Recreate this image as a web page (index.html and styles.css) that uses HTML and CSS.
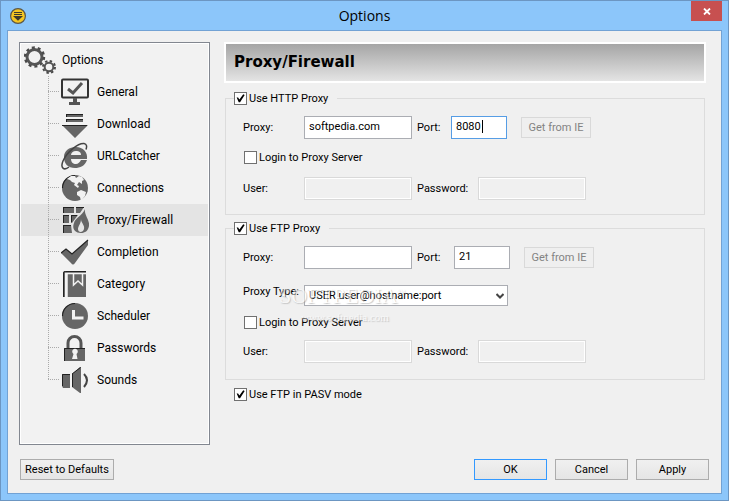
FILE: index.html
```
<!DOCTYPE html>
<html lang="en">
<head>
  <meta charset="UTF-8" />
  <meta name="viewport" content="width=device-width, initial-scale=1" />
  <title>Options</title>
  <link rel="stylesheet" href="styles.css">
</head>
<body>
  <div class="window">
    <header class="titlebar">
      <svg class="app-icon" viewBox="0 0 16 16">
        <circle cx="8" cy="8" r="7.4" fill="#f5c622" stroke="#5a5648" stroke-width="1.2"/>
        <path d="M4 4.500h8M4 6.500h8" stroke="#3d3a2c" stroke-width="1"/>
        <path d="M3 8h10l-5 4.800z" fill="#3d3a2c"/>
      </svg>
      <h1>Options</h1>
      <button class="close" aria-label="Close">
        <svg viewBox="0 0 8 7"><path d="M1 0.500l6 6M7 0.500l-6 6" stroke="#fff" stroke-width="1.800"/></svg>
      </button>
    </header>

    <form class="content">
      <div class="main">
        <nav class="tree">
          <a href="#options" class="root">
            <svg class="gears" viewBox="0 0 32 28">
              <circle cx="10.500" cy="11" r="7.500" fill="none" stroke="#555" stroke-width="3"/>
              <circle cx="10.500" cy="11" r="9.500" fill="none" stroke="#4a4a4a" stroke-width="2.400" stroke-dasharray="3 2.970"/>
              <circle cx="25" cy="21" r="4.300" fill="none" stroke="#555" stroke-width="2"/>
              <circle cx="25" cy="21" r="6" fill="none" stroke="#4a4a4a" stroke-width="2" stroke-dasharray="2.400 2.310"/>
            </svg>
            Options
          </a>
          <ul>
            <li><a href="#general">
              <svg viewBox="0 0 28 28">
                <rect x="1" y="1.500" width="26" height="18" rx="1" fill="none" stroke="#333" stroke-width="2"/>
                <path d="M7 11l5 4 9-10" fill="none" stroke="#555" stroke-width="3"/>
                <path d="M12 20h4v4h3v3H8v-3h4z" fill="#555"/>
              </svg>General</a></li>
            <li><a href="#download">
              <svg viewBox="0 0 28 28">
                <path d="M5 4h17v3H5zM5 9h17v3H5zM1 15h26L14 28z" fill="#666"/>
                <path d="M5 4.500h17M5 9.500h17M1 15.500h25M5.500 4v3M5.500 9v3" stroke="#222"/>
              </svg>Download</a></li>
            <li><a href="#urlcatcher">
              <svg viewBox="0 0 28 28">
                <path d="M26 18c-2 6-7 8-12 8-7 0-11-4-11-11C3 9 8 5 15 5s12 5 11 12H10c0 3 2 5 5 5 2 0 4-2 5-4zM10 13h10c0-3-2-4-5-4s-5 2-5 4z" fill="#666" fill-rule="evenodd"/>
                <path d="M8 25c-5 4-9 1-6-6C6 10 17 1 23 1.500c3 0.500 3 3 2 6" fill="none" stroke="#444" stroke-width="1.500"/>
              </svg>URLCatcher</a></li>
            <li><a href="#connections">
              <svg viewBox="0 0 28 28">
                <circle cx="14" cy="14" r="13" fill="#666"/>
                <path d="M1.500 14A12.500 12.500 0 0 1 14 1.500" fill="none" stroke="#222" stroke-width="1.200"/>
                <path d="M6 5l4-3h4l1 2 3-2 3 1 2 3-2 1v3l-3-2-2 3 2 1-1 2-4-3 1-2-3-1-2-2zM16 18l4-2 5 2-1 4-4 5-1-4-3-2z" fill="#f2f2f2"/>
              </svg>Connections</a></li>
            <li class="selected"><a href="#proxy">
              <svg viewBox="0 0 28 28">
                <path d="M2 1h11v6H2zM15 1h8l-4 6h-4zM2 9h6v8H2zM10 9h7l-6 8h-1zM2 19h8l1 8H2z" fill="#666"/>
                <path d="M2 1.500h11M15 1.500h8M2 9.500h6M10 9.500h6M2 19.500h8M2.500 1v6M2.500 9v8M2.500 19v8M10.500 9v7" stroke="#222"/>
                <path d="M24 3c-1 6 5 11 4 17-1 5-4 7-8 7-7 0-9-5-7-10 1-5 8-7 11-14z" fill="#666"/>
                <path d="M20 13c0 4 4 6 3 10-1 4-6 4-6 0 0-3 3-5 3-10z" fill="#e4e4e4"/>
              </svg>Proxy/Firewall</a></li>
            <li><a href="#completion">
              <svg viewBox="0 0 28 28">
                <path d="M0 15l5-4 6 5L27 2v5L14 25q-2 3-4 0z" fill="#666"/>
                <path d="M0 15l5-4 6 5L27 2" fill="none" stroke="#222" stroke-width="1.200"/>
              </svg>Completion</a></li>
            <li><a href="#category">
              <svg viewBox="0 0 28 28">
                <path d="M4 1h21v26H6V4H4v23H2V3q0-2 2-2z" fill="#666"/>
                <path d="M2.500 27V3q0-1.500 2-1.500H25" fill="none" stroke="#222"/>
                <path d="M4 3.500h21M6 4v23" stroke="#f2f2f2" stroke-width="1.500"/>
                <path d="M12.500 4v11l4.500-4 4.500 4V4" fill="none" stroke="#f2f2f2" stroke-width="1.500"/>
              </svg>Category</a></li>
            <li><a href="#scheduler">
              <svg viewBox="0 0 28 28">
                <circle cx="14" cy="14" r="13" fill="#666"/>
                <path d="M1.500 14A12.500 12.500 0 0 1 14 1.500" fill="none" stroke="#222" stroke-width="1.200"/>
                <path d="M12.500 8v8h10" fill="none" stroke="#f2f2f2" stroke-width="3"/>
              </svg>Scheduler</a></li>
            <li><a href="#passwords">
              <svg viewBox="0 0 28 28">
                <path d="M7 14V9a6.500 6.500 0 0 1 13 0v5" fill="none" stroke="#555" stroke-width="3"/>
                <path d="M3 14h21v13H3z" fill="#666"/>
                <path d="M3.500 27V14.500H24" fill="none" stroke="#222"/>
                <path d="M11 25l1.500-5a2.800 2.800 0 1 1 3 0l1 5z" fill="#f2f2f2"/>
              </svg>Passwords</a></li>
            <li><a href="#sounds">
              <svg viewBox="0 0 28 28">
                <path d="M1 8h8v14H2l-1-2zM11 8l8-7h1v26h-1l-8-6z" fill="#666"/>
                <path d="M1.500 20V8.500H9M11 8l8.500-6.500M11.500 8v13" fill="none" stroke="#222"/>
                <path d="M23 8q6 6 0 13" fill="none" stroke="#444" stroke-width="2"/>
              </svg>Sounds</a></li>
          </ul>
        </nav>

        <section class="page">
          <h2>Proxy/Firewall</h2>

          <fieldset>
            <legend><label class="check"><input type="checkbox" checked> Use HTTP Proxy</label></legend>
            <div class="row">
              <label class="name" for="http-proxy">Proxy:</label>
              <input type="text" id="http-proxy" class="field" value="softpedia.com">
              <label class="port-name" for="http-port">Port:</label>
              <span class="port-box">
                <input type="text" id="http-port" class="port active" value="8080">
                <span class="caret"></span>
              </span>
              <button type="button" class="get" disabled>Get from IE</button>
            </div>
            <label class="check login"><input type="checkbox"> Login to Proxy Server</label>
            <div class="row">
              <label class="name" for="http-user">User:</label>
              <input type="text" id="http-user" class="field" disabled>
              <label class="pass-name" for="http-pass">Password:</label>
              <input type="password" id="http-pass" class="field" disabled>
            </div>
          </fieldset>

          <fieldset class="ftp">
            <legend><label class="check"><input type="checkbox" checked> Use FTP Proxy</label></legend>
            <div class="row">
              <label class="name" for="ftp-proxy">Proxy:</label>
              <input type="text" id="ftp-proxy" class="field">
              <label class="port-name wide" for="ftp-port">Port:</label>
              <input type="text" id="ftp-port" class="port" value="21">
              <button type="button" class="get" disabled>Get from IE</button>
            </div>
            <div class="row type">
              <label class="name" for="ftp-type">Proxy Type:</label>
              <span class="combo">
                <select id="ftp-type"><option>USER user@hostname:port</option></select>
                <svg viewBox="0 0 8 6"><path d="M0.500 1l3.500 3.500L7.500 1" fill="none" stroke="#444" stroke-width="2"/></svg>
              </span>
              <div class="watermark">
                <span class="brand">SOFTPEDIA<sup>™</sup></span>
                <span class="site">www.softpedia.com</span>
              </div>
            </div>
            <label class="check login"><input type="checkbox"> Login to Proxy Server</label>
            <div class="row">
              <label class="name" for="ftp-user">User:</label>
              <input type="text" id="ftp-user" class="field" disabled>
              <label class="pass-name" for="ftp-pass">Password:</label>
              <input type="password" id="ftp-pass" class="field" disabled>
            </div>
          </fieldset>

          <label class="check pasv"><input type="checkbox" checked> Use FTP in PASV mode</label>
        </section>
      </div>

      <footer>
        <button type="button" class="reset">Reset to Defaults</button>
        <button type="button" class="default">OK</button>
        <button type="button">Cancel</button>
        <button type="button">Apply</button>
      </footer>
    </form>
  </div>
</body>
</html>
```
FILE: styles.css
```
* {
  box-sizing: border-box;
}

body {
  margin: 0;
  font-family: Roboto, Tahoma, sans-serif;
  font-size: 11px;
  line-height: 13px;
  color: #000;
}

input, select, button {
  font: inherit;
  color: inherit;
  margin: 0;
}

.window {
  min-height: 100vh;
  display: flex;
  flex-direction: column;
  background: #8cc6fa;
  border: 1px solid #6c96c2;
  padding: 0 6px 6px;
}

/* Title bar */
.titlebar {
  display: grid;
  grid-template-columns: 46px 1fr 46px;
  align-items: center;
  height: 29px;
}

.app-icon {
  width: 16px;
  height: 16px;
  margin-left: 3px;
}

.titlebar h1 {
  margin: 0;
  text-align: center;
  font: 14px/20px "Open Sans", "Segoe UI", sans-serif;
}

.close {
  justify-self: end;
  align-self: start;
  width: 31px;
  height: 20px;
  padding: 0;
  border: none;
  background: #c75050;
}

.close svg {
  width: 8px;
  height: 7px;
}

.content {
  flex: 1;
  display: flex;
  flex-direction: column;
  background: #f0f0f0;
  border: 1px solid #72a2d4;
  padding: 11px 12px 13px 11px;
}

.main {
  flex: 1;
  display: flex;
  gap: 14px;
  margin-bottom: 14px;
}

/* Category tree */
.tree {
  width: 191px;
  flex: none;
  background: #f2f2f2;
  border: 1px solid #828790;
  box-shadow: inset 0 0 0 1px #fff;
  padding: 1px;
  font: 12px/16px Roboto, "Segoe UI", sans-serif;
}

.tree ul {
  list-style: none;
  margin: 0;
  padding: 0;
}

.tree a {
  display: flex;
  align-items: center;
  height: 32px;
  color: #000;
  text-decoration: none;
}

.tree .root {
  gap: 6px;
  padding-left: 3px;
}

.tree li a {
  gap: 8px;
  padding-left: 40px;
}

.tree svg {
  width: 28px;
  height: 28px;
}

.tree .gears {
  width: 32px;
}

/* dotted connector lines */
.tree li {
  background-image:
    repeating-linear-gradient(to bottom, #aaa 0 1px, transparent 1px 2px),
    repeating-linear-gradient(to right, #aaa 0 1px, transparent 1px 2px);
  background-size: 1px 100%, 12px 1px;
  background-position: 27px 0, 27px 15px;
  background-repeat: no-repeat;
}

.tree li:last-child {
  background-size: 1px 16px, 12px 1px;
}

.tree .selected {
  background-color: #e4e4e4;
}

/* Settings page */
.page {
  flex: 1;
  min-width: 0;
  margin-right: 3px;
}

.page h2 {
  margin: 0 0 9px;
  height: 41px;
  padding: 0 8px;
  border: 2px solid #fff;
  background: linear-gradient(#a5a5a5, #e4e4e4);
  font: bold 15px/37px "DejaVu Sans", Verdana, sans-serif;
}

fieldset {
  min-width: 0;
  margin: 0 1px 7px;
  border: 1px solid #dcdcdc;
  padding: 11px 8px 14px 17px;
}

fieldset.ftp {
  margin-bottom: 8px;
  padding-bottom: 16px;
}

legend {
  margin-left: -9px;
  padding: 0 9px 0 0;
}

.check {
  display: flex;
  align-items: center;
  gap: 2px;
}

.check input {
  appearance: none;
  width: 13px;
  height: 13px;
  background: #fff;
  border: 1px solid #707070;
}

.check input:checked::before {
  content: "";
  display: block;
  width: 11px;
  height: 11px;
  background: #000;
  clip-path: polygon(15% 42%, 28% 42%, 40% 60%, 75% 12%, 88% 18%, 46% 84%, 34% 84%);
}

.row {
  display: flex;
  align-items: center;
}

.name {
  width: 61px;
}

.field, .port {
  height: 23px;
  padding: 0 4px 2px;
  border: 1px solid #abadb3;
  background: #fff;
  outline: none;
}

.field {
  width: 108px;
}

.field:disabled {
  background: #f0f0f0;
  border-color: #d9d9d9;
  box-shadow: inset 0 0 0 1px #fff;
}

.port {
  width: 56px;
}

.port.active {
  border-color: #569de5;
}

.port-name, .pass-name {
  width: 34px;
  margin-left: 5px;
}

.port-name.wide {
  width: 37px;
}

.pass-name {
  width: 61px;
}

.port-box {
  position: relative;
}

.caret {
  position: absolute;
  left: 31px;
  top: 4px;
  width: 1px;
  height: 13px;
  background: #000;
}

.login {
  margin: 12px 0 13px 1px;
}

.ftp .login {
  margin: 10px 0 11px 1px;
}

button {
  width: 73px;
  height: 21px;
  padding: 0;
  border: 1px solid #acacac;
  background: linear-gradient(#f0f0f0, #e5e5e5);
}

button.get {
  width: 70px;
  margin-left: 14px;
  border-color: #d9d9d9;
  background: #efefef;
  color: #838383;
}

.type {
  position: relative;
  align-items: flex-start;
  margin-top: 16px;
}

.combo {
  position: relative;
}

.combo select {
  display: block;
  appearance: none;
  width: 204px;
  height: 21px;
  padding: 0 4px;
  border: 1px solid #abadb3;
  border-radius: 0;
  background: #fff;
}

.combo svg {
  position: absolute;
  right: 4px;
  top: 8px;
  width: 8px;
  height: 6px;
}

/* faint logo over the form */
.watermark {
  position: absolute;
  left: 36px;
  top: -2px;
  display: flex;
  flex-direction: column;
  font-family: "Liberation Serif", serif;
  color: #fff;
  opacity: 0.5;
  text-shadow: 1px 1px 1px #999;
  pointer-events: none;
}

.brand {
  font-size: 22px;
  line-height: 26px;
}

.brand sup {
  font-size: 8px;
  line-height: 8px;
}

.site {
  margin: 2px 0 0 22px;
  font-size: 11px;
}

.pasv {
  margin-left: 10px;
}

footer {
  display: flex;
  gap: 8px;
  padding-left: 1px;
}

.reset {
  width: 94px;
  margin-right: auto;
}

.default {
  border-color: #3399ff;
}
```
